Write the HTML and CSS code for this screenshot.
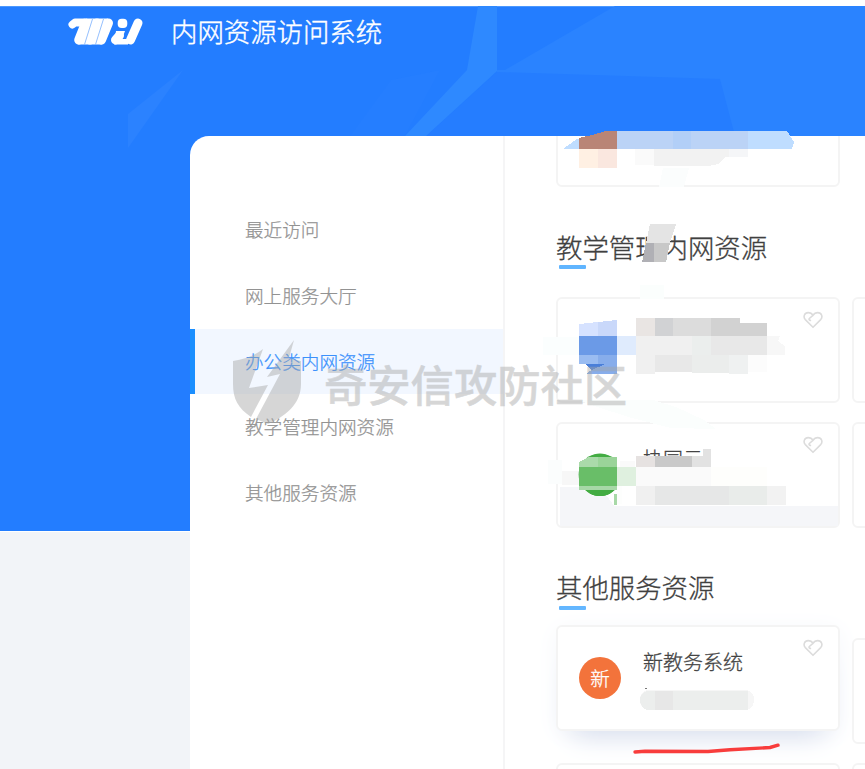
FILE: index.html
```html
<!DOCTYPE html>
<html lang="zh-CN">
<head>
<meta charset="utf-8">
<title>内网资源访问系统</title>
<link rel="stylesheet" href="styles.css">
</head>
<body>
<svg class="defs" width="0" height="0">
  <symbol id="heart" viewBox="0 0 20 18">
    <path d="M10 16.300 2.300 8.600C-.2 5.600 1.600 1.600 5.200 1.600c2 0 3.700 1 4.800 2.800 1.100-1.800 2.800-2.800 4.800-2.800 3.600 0 5.400 4 2.900 7Z"/>
    <path d="M10 4.400 6.300 7.500c-.8 1 .4 2.400 1.600 1.500"/>
  </symbol>
</svg>
<div class="page">
  <div class="hero">
    <svg class="hero-art" width="865" height="525" viewBox="0 6 865 525">
      <path d="M615 6H865V136H426L497 78V70L505 70Z" fill="#2a83ff"/>
      <path d="M497 72 720 79 735 136H426Z" fill="#257dff"/>
      <path d="M391 80 440 70 405 136H350Z" fill="#257eff"/>
      <path d="M478 6H497V71L426 136H405L467 70Z" fill="#2e89ff"/>
      <path d="M183 70 128 148V114Z" fill="#2b82ff"/>
    </svg>
    <header class="header">
      <svg class="logo" width="78" height="30" viewBox="67 17 78 30">
        <g fill="none" stroke="#fff" stroke-width="9" stroke-linecap="round" stroke-linejoin="round">
          <path d="M85.500 23 78.700 40M97 23 90 40M108.500 23 101.500 40M119.500 35.500 115.500 40M138 23 130.500 40"/>
          <path d="M72.500 24.500 75 22.500H84" stroke-width="8"/>
        </g>
        <path d="M86 18.500h22l-6 26H78Z" fill="#fff"/>
        <path d="M116 31h9l-3 8h6v5.500h-14Z" fill="#fff"/>
        <rect x="117.700" y="18.800" width="9.600" height="9.200" rx="4" fill="#fff"/>
        <path d="M92.500 19 84.500 44.500M103.500 19 95.500 44.500" stroke="#79aefc" stroke-width=".8"/>
      </svg>
      <h1 class="title">内网资源访问系统</h1>
    </header>
  </div>
  <main class="panel">
    <nav class="menu">
      <a class="item">最近访问</a>
      <a class="item">网上服务大厅</a>
      <a class="item active">办公类内网资源</a>
      <a class="item">教学管理内网资源</a>
      <a class="item">其他服务资源</a>
    </nav>
    <div class="content">
      <div class="grid first"><div class="card"></div></div>
      <h2 class="heading">教学管理内网资源</h2>
      <div class="grid">
        <div class="card"><svg class="heart"><use href="#heart"/></svg></div>
        <div class="card"></div>
        <div class="card"><svg class="heart"><use href="#heart"/></svg><span class="avatar green"></span><div class="info"><h3 class="name">协同云</h3></div></div>
        <div class="card"></div>
      </div>
      <h2 class="heading other">其他服务资源</h2>
      <div class="grid">
        <div class="card raised"><svg class="heart"><use href="#heart"/></svg><span class="avatar">新</span><div class="info"><h3 class="name">新教务系统</h3></div></div>
        <div class="card"></div>
        <div class="card"></div>
        <div class="card"></div>
      </div>
    </div>
  </main>
  <svg class="overlay" width="865" height="769" viewBox="0 0 865 769" shape-rendering="crispEdges">
    <path d="M563 149 577 139 592 135 617 131H787L794 142 792 149Z" fill="#bfddff"/>
    <path d="M617 131h131v18H617Z" fill="#bbd3f6"/>
    <path d="M673 131h18v18h-18Z" fill="#b2cff7"/>
    <path d="M579 138 592 135 606 131h11v18h-38Z" fill="#b98576"/>
    <path d="M579 149h19v19h-19Z" fill="#fff0e3"/><path d="M598 149h19v19h-19Z" fill="#fae7df"/>
    <path d="M635 149h19v16h-19Z" fill="#fafafa"/>
    <path d="M654 149h94v8h-22l-8 7-9 2h-55Z" fill="#f2f2f2"/><path d="M729 149h19v8h-19Z" fill="#f5f6f8"/>
    <path d="M663 168h26l-5 19h-25Z" fill="#fbfdfd"/>

    <path d="M650 224h26l-6 19h-24Z" fill="#e4e4e4"/><path d="M646 243h8v19h-12Z" fill="#b0b0b5"/><path d="M654 243h16l-4 19h-12Z" fill="#c8c8c8"/>
    <path d="M640 285h24v14h-24Z" fill="#fbfefd"/>

    <path d="M543 337h36v18h-36Z" fill="#fbfefe"/>
    <path d="M579 324l19-2v14h-19Z" fill="#d6e2ff"/><path d="M598 322l19-2v16h-19Z" fill="#c9d8fa"/>
    <path d="M579 336h38v19h-38Z" fill="#6b9ae7"/><path d="M617 336h19v19h-19Z" fill="#dfebfd"/>
    <path d="M579 355h19v9h-19Z" fill="#9abcf1"/><path d="M598 355h19v19h-31l12-9Z" fill="#87adeb"/>
    <path d="M585 364h20l-13 6Z" fill="#4a7fd9"/>
    <path d="M636 318h19v18h-19Z" fill="#e9e5e3"/><path d="M655 318h18v18h-18Z" fill="#d1d2d4"/><path d="M673 318h38v18h-38Z" fill="#dcdcdc"/><path d="M711 318h29v5h27v13h-56Z" fill="#d2d2d2"/>
    <path d="M636 336h75v19h-75Z" fill="#f0f0f0"/><path d="M692 336h19v19h-19Z" fill="#ebeeed"/><path d="M711 336h56v19h-56Z" fill="#e8e8e8"/><path d="M767 336h13l-2 5 7 5v9h-18Z" fill="#f7f7f7"/>
    <path d="M636 355h19v19h-19Z" fill="#f0f0f0"/><path d="M655 355h37v17h-37Z" fill="#e8e8e8"/><path d="M692 355h37v18h-37Z" fill="#ebedec"/><path d="M729 355h19v19h-19Z" fill="#eff1f1"/><path d="M748 355h19v17h-19Z" fill="#fcfcfc"/>
    <path d="M578 400h75l23 7 28 13 12 9-45-1-39-10-38-12Z" fill="#fbfefd"/>

    <path d="M560 487h19l14 9h14l7 10h224v20H560Z" fill="#f5f6f9"/>
    <path d="M548 460h14v24h-14Z" fill="#fbfdfd"/>
    <path d="M562 471h17v14h-17Z" fill="#f7f7f7"/><path d="M620 461h15v6h-15Z" fill="#fafafa"/>
    <path class="green-disc" d="M600 453.500a21.300 21.300 0 1 1-.1 0Z"/>
    <path d="M579 462l10-5h28v10h-38Z" fill="#9ad499"/><path d="M579 462l10-5h9v10h-19Z" fill="#aadaaa"/>
    <path d="M579 467h38v19h-38Z" fill="#69be68"/><path d="M579 486h38v4h-38Z" fill="#a7d8a7"/>
    <path d="M617 458h3v9h-3Z" fill="#fff"/><path d="M617 486h5v18h-5Z" fill="#fdfefd"/>
    <path d="M617 467h19v19h-19Z" fill="#dff0df"/><path d="M614 494h3v11h-3Z" fill="#a8d9a8"/>
    <path d="M636 456h19v11h-19Z" fill="#e6e2e1"/><path d="M655 456h37v11h-37Z" fill="#c9c9c9"/><path d="M692 456h11v-7h8v18h-19Z" fill="#e2e2e2"/>
    <path d="M636 467h75v19h-75Z" fill="#fafafa"/><path d="M711 467h56v19h-56Z" fill="#fefefc"/>
    <path d="M636 486h19v19h-19Z" fill="#f0f0f0"/><path d="M655 486h112v19H655Z" fill="#e6e7e7"/><path d="M729 486h38v19h-38Z" fill="#e9ecea"/><path d="M767 486h19v19h-19Z" fill="#f2f2f2"/>

    <rect x="640" y="690" width="114" height="20" rx="9" fill="#f6f6f6"/><path d="M640 700c0-7 5-9 9-9h99v19h-99c-4 0-9-3-9-10Z" fill="#eceeed"/><path d="M655 691h18v19h-18Z" fill="#e7e7e7"/>
    <path d="M645 688h2v1h-2Z" fill="#777"/>
    <path class="stroke" d="M635 752 645 751.300 708 751.500 730 749.700 770 747.500 778 745.200"/>
  </svg>
  <div class="watermark">
    <svg width="70" height="84" viewBox="231 340 70 84">
      <path d="M233 361Q252 358 263 349L249 388 268 385 251 417C238 408 233 399 233 384ZM294 340 289 358 301 361V384C301 405 284 417 268 424L256 419 280 374 267 377Z" fill="#a4a4a4"/>
    </svg>
    <span class="mark">奇安信攻防社区</span>
  </div>
</div>
</body>
</html>
```
FILE: styles.css
```css
* { box-sizing: border-box; }
body {
  margin: 0;
  background: #fff;
  font-family: "Noto Sans CJK SC", sans-serif;
  font-weight: 300;
}
.defs { position: absolute; }
.page {
  position: relative;
  width: 865px;
  height: 769px;
  padding-top: 6px;
  overflow: hidden;
  background: linear-gradient(#fff 6px, #f2f4f8 6px);
}
.hero {
  position: relative;
  height: 525px;
  background: #237dff;
  border-top: 1px solid #4b98ff;
  box-shadow: 0 1px #fff;
}
.hero-art { position: absolute; top: -1px; left: 0; }
.header {
  position: relative;
  display: flex;
  align-items: center;
  height: 50px;
  padding-left: 67px;
  gap: 26px;
}
.title {
  margin: 0;
  color: #fff;
  font-size: 26.4px;
  font-weight: 300;
  line-height: 48px;
  padding-bottom: 2px;
  -webkit-text-stroke: .4px;
}
.panel {
  position: relative;
  display: flex;
  width: 700px;
  height: 633px;
  margin: -395px 0 0 190px;
  overflow: hidden;
  background: #fff;
  border-top-left-radius: 19px;
}
.menu {
  flex: none;
  width: 315px;
  padding-top: 61px;
  border-right: 2px solid #f5f5f6;
}
.item {
  display: block;
  height: 65.8px;
  padding-left: 55px;
  color: #929292;
  font-size: 18.6px;
  line-height: 63px;
  -webkit-text-stroke: .25px;
}
.active {
  padding-left: 50px;
  color: #3b91fc;
  background: #f2f7ff;
  border-left: 5px solid #1b8fff;
}
.content { padding-left: 51px; }
.grid {
  display: grid;
  grid-template-columns: 284px 284px;
  gap: 19px 12px;
}
.first { height: 51px; align-content: end; }
.card {
  position: relative;
  display: flex;
  height: 106px;
  padding: 30px 0 0 21px;
  gap: 22px;
  background: #fff;
  border: 2px solid #f4f4f4;
  border-radius: 6px;
}
.raised {
  top: -13px;
  box-shadow: 0 22px 28px -18px #d5dcec, 0 4px 24px #f5f7fb;
}
.heart {
  position: absolute;
  top: 12px;
  right: 15px;
  width: 20px;
  height: 18px;
  fill: none;
  stroke: #dcdcdc;
  stroke-width: 1.6;
  stroke-linejoin: round;
}
.avatar {
  width: 42px;
  height: 42px;
  border-radius: 50%;
  color: #fff;
  background: #f3733b;
  font-size: 19.5px;
  line-height: 41px;
  text-align: center;
  -webkit-text-stroke: .3px;
}
.green { background: #43ac43; }
.green-disc { fill: #43ac43; shape-rendering: auto; }
.name {
  margin: -8px 0 0;
  color: #444;
  font-size: 20px;
  font-weight: 300;
  line-height: 26px;
  -webkit-text-stroke: .3px;
}
.heading {
  position: relative;
  height: 110px;
  margin: 0;
  padding-top: 40px;
  color: #404040;
  font-size: 26.4px;
  font-weight: 300;
  line-height: 40px;
  -webkit-text-stroke: .3px;
}
.other { padding-top: 39px; }
.heading::after {
  content: "";
  position: absolute;
  top: 78px;
  left: 3px;
  width: 27px;
  height: 4px;
  border-radius: 1px;
  background: #60b5ff;
}
.overlay { position: absolute; top: 0; left: 0; }
.stroke {
  fill: none;
  stroke: #f83c3c;
  stroke-width: 3.4;
  stroke-linecap: round;
  stroke-linejoin: round;
  shape-rendering: auto;
}
.watermark {
  position: absolute;
  top: 340px;
  left: 231px;
  display: flex;
  gap: 23px;
  opacity: .44;
}
.mark {
  padding-top: 14px;
  color: #a4a4a4;
  font-size: 43.3px;
  font-weight: 500;
  line-height: 58px;
  white-space: nowrap;
  -webkit-text-stroke: .5px;
}
```
